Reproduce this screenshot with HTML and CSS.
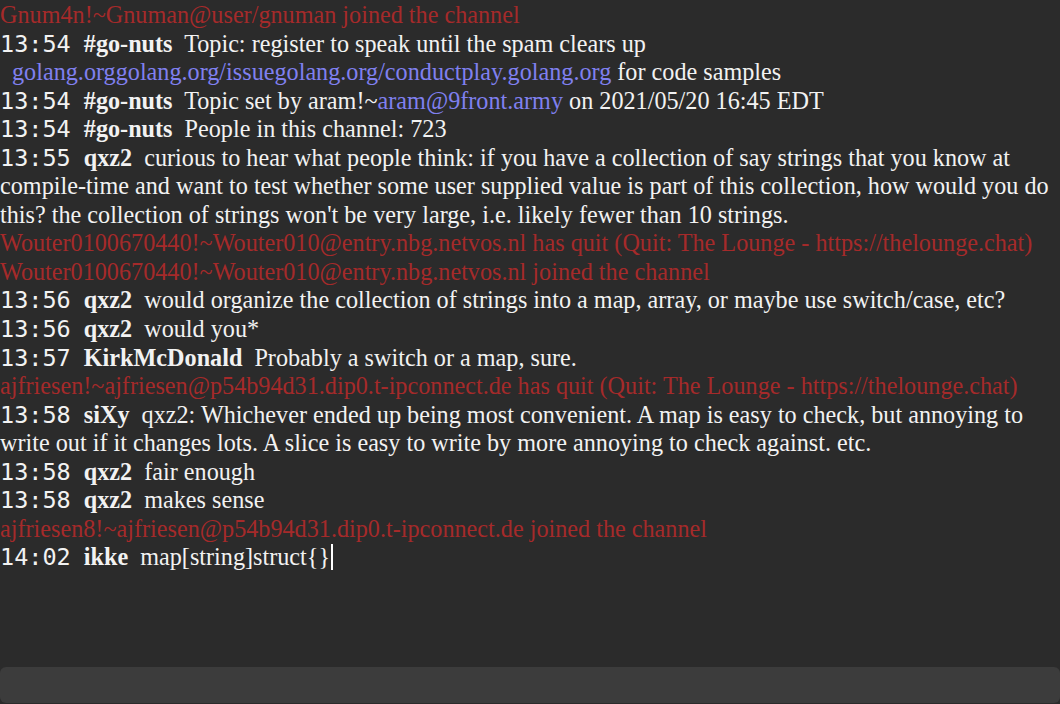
FILE: index.html
```html
<!DOCTYPE html>
<html>
<head>
<meta charset="utf-8">
<link rel="stylesheet" href="styles.css">
</head>
<body>
<div class="app">
  <div class="log">
    <div class="line sys">Gnum4n!~Gnuman@user/gnuman joined the channel</div>
    <div class="line"><span class="ts">13:54</span> <span class="nick">#go-nuts</span> <span class="msg">Topic: register to speak until the spam clears up<br><span class="indent"></span><span class="link">golang.org</span><span class="link">golang.org/issue</span><span class="link">golang.org/conduct</span><span class="link">play.golang.org</span> for code samples</span></div>
    <div class="line"><span class="ts">13:54</span> <span class="nick">#go-nuts</span> <span class="msg">Topic set by aram!~<span class="link">aram@9front.army</span> on 2021/05/20 16:45 EDT</span></div>
    <div class="line"><span class="ts">13:54</span> <span class="nick">#go-nuts</span> <span class="msg">People in this channel: 723</span></div>
    <div class="line"><span class="ts">13:55</span> <span class="nick">qxz2</span> <span class="msg">curious to hear what people think: if you have a collection of say strings that you know at compile-time and want to test whether some user supplied value is part of this collection, how would you do this? the collection of strings won't be very large, i.e. likely fewer than 10 strings.</span></div>
    <div class="line sys">Wouter0100670440!~Wouter010@entry.nbg.netvos.nl has quit (Quit: The Lounge - https://thelounge.chat)</div>
    <div class="line sys">Wouter0100670440!~Wouter010@entry.nbg.netvos.nl joined the channel</div>
    <div class="line"><span class="ts">13:56</span> <span class="nick">qxz2</span> <span class="msg">would organize the collection of strings into a map, array, or maybe use switch/case, etc?</span></div>
    <div class="line"><span class="ts">13:56</span> <span class="nick">qxz2</span> <span class="msg">would you*</span></div>
    <div class="line"><span class="ts">13:57</span> <span class="nick">KirkMcDonald</span> <span class="msg">Probably a switch or a map, sure.</span></div>
    <div class="line sys">ajfriesen!~ajfriesen@p54b94d31.dip0.t-ipconnect.de has quit (Quit: The Lounge - https://thelounge.chat)</div>
    <div class="line"><span class="ts">13:58</span> <span class="nick">siXy</span> <span class="msg">qxz2: Whichever ended up being most convenient. A map is easy to check, but annoying to write out if it changes lots. A slice is easy to write by more annoying to check against. etc.</span></div>
    <div class="line"><span class="ts">13:58</span> <span class="nick">qxz2</span> <span class="msg">fair enough</span></div>
    <div class="line"><span class="ts">13:58</span> <span class="nick">qxz2</span> <span class="msg">makes sense</span></div>
    <div class="line sys">ajfriesen8!~ajfriesen@p54b94d31.dip0.t-ipconnect.de joined the channel</div>
    <div class="line"><span class="ts">14:02</span> <span class="nick">ikke</span> <span class="msg">map[string]struct{}<span class="caret"></span></span></div>
  </div>
  <div class="input"></div>
</div>
</body>
</html>
```
FILE: styles.css
```css
html, body {
  margin: 0;
  padding: 0;
  background: #2b2b2b;
}
.app {
  width: 1060px;
  height: 704px;
  display: flex;
  flex-direction: column;
  overflow: hidden;
}
.log {
  flex: 1;
  padding-top: 1px;
  font-family: "Liberation Serif", serif;
  font-size: 24.2px;
  line-height: 28.55px;
  color: #f2f2f2;
}
.line {
  margin: 0;
}
.sys {
  color: #a52a2a;
}
.ts {
  font-family: "DejaVu Sans Mono", monospace;
  font-size: 23.5px;
  margin-right: 7px;
}
.nick {
  font-weight: bold;
  margin-right: 6px;
}
.link {
  color: #8080f0;
}
.indent {
  display: inline-block;
  width: 12px;
}
.caret {
  display: inline-block;
  width: 2px;
  height: 26px;
  background: #ffffff;
  vertical-align: -5px;
  margin-left: 1px;
}
.input {
  height: 36px;
  margin-bottom: 1px;
  background: #3c3c3c;
  border-radius: 6px;
  flex: none;
}
```
